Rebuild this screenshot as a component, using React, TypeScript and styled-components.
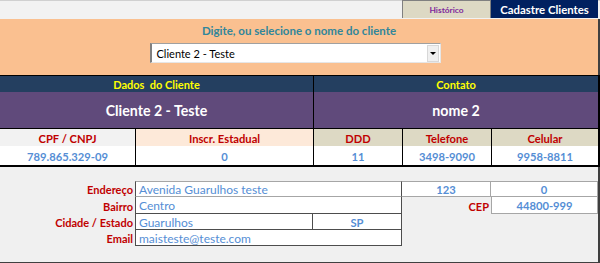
import React from "react";
import styled, { createGlobalStyle, css } from "styled-components";

const GlobalStyle = createGlobalStyle`
  html, body { margin: 0; padding: 0; background: #ffffff; }
  body { font-family: Lato, "Liberation Sans", sans-serif; }
  * { box-sizing: border-box; }
`;

const DARK = "#4d4d4d";
const LIGHT = "#a6a6a6";

const Frame = styled.div`
  width: 600px;
  height: 263px;
  overflow: hidden;
  background: #f0f0f0;
  display: flex;
  flex-direction: column;
`;

const TopBar = styled.div`
  height: 19px;
  flex: none;
  background: #f2f2f2;
  border-top: 1px solid #d0d0d0;
  display: flex;
  justify-content: flex-end;
  padding-right: 2px;
`;

const Tab = styled.div<{ $active?: boolean }>`
  height: 18px;
  margin-top: -1px;
  display: flex;
  align-items: center;
  justify-content: center;
  font-weight: 700;
  ${(p) =>
    p.$active
      ? css`
          width: 107px;
          background: #002060;
          color: #ffffff;
          font-size: 11.4px;
        `
      : css`
          width: 89px;
          background: #ddd9c4;
          color: #7f2a9c;
          font-size: 8.4px;
          border-top: 1px solid #808080;
          border-left: 1px solid #808080;
          border-right: 1px solid #808080;
        `}
`;

const SearchPanel = styled.div`
  height: 56px;
  flex: none;
  background: #fac090;
  border-right: 2px solid #404040;
  display: flex;
  flex-direction: column;
  align-items: center;
`;

const SearchTitle = styled.div`
  margin-top: 4px;
  height: 16px;
  line-height: 16px;
  font-size: 11.5px;
  font-weight: 700;
  color: #31869b;
`;

const Select = styled.div`
  margin-top: 4px;
  margin-right: 8px;
  width: 291px;
  height: 20px;
  background: #ffffff;
  border-top: 1px solid #a0a0a0;
  border-left: 2px solid #808080;
  border-right: 1px solid #e6e6e6;
  border-bottom: 1px solid #e6e6e6;
  display: flex;
  align-items: center;
  justify-content: space-between;
  padding-left: 5px;
  padding-right: 1px;
`;

const SelectText = styled.span`
  font-size: 11px;
  color: #000000;
`;

const DropButton = styled.div`
  width: 12px;
  height: 17px;
  background: #f0f0f0;
  border: 1px solid #d8d8d8;
  display: flex;
  align-items: center;
  justify-content: center;
  &::after {
    content: "";
    border-left: 3px solid transparent;
    border-right: 3px solid transparent;
    border-top: 3px solid #000000;
    margin-top: 1px;
  }
`;

const Table = styled.div`
  flex: none;
  border-top: 1px solid #000000;
  border-right: 2px solid #000000;
  border-bottom: 2px solid #000000;
`;

const SectionRow = styled.div<{ $tall?: boolean }>`
  display: grid;
  grid-template-columns: 314px 284px;
  height: ${(p) => (p.$tall ? "36px" : "16px")};
  background: ${(p) => (p.$tall ? "#604a7b" : "#243f60")};
`;

const SectionCell = styled.div<{ $tall?: boolean }>`
  display: flex;
  align-items: center;
  justify-content: center;
  white-space: pre;
  font-weight: 700;
  color: ${(p) => (p.$tall ? "#ffffff" : "#ffff00")};
  font-size: ${(p) => (p.$tall ? "14.2px" : "11px")};
  padding-top: ${(p) => (p.$tall ? "1px" : "0")};
  &:first-child {
    border-right: 1px solid #000000;
  }
`;

const DataRow = styled.div<{ $head?: boolean }>`
  display: grid;
  grid-template-columns: 136px 178px 89px 89px 106px;
  height: ${(p) => (p.$head ? "18px" : "19px")};
  border-top: ${(p) => (p.$head ? "1px solid #000000" : "none")};
`;

const DataCell = styled.div<{ $bg?: string; $head?: boolean }>`
  display: flex;
  align-items: center;
  justify-content: center;
  background: ${(p) => p.$bg ?? "#ffffff"};
  color: ${(p) => (p.$head ? "#c00000" : "#558ed5")};
  font-weight: 700;
  font-size: 11.2px;
  padding-top: 1px;
  &:not(:last-child) {
    border-right: 1px solid #000000;
  }
`;

const FormArea = styled.div`
  flex: 1;
  background: #f0f0f0;
  border-right: 2px solid #3f3f3f;
  border-bottom: 1px solid #404040;
  padding-top: 14px;
`;

const FormGrid = styled.div`
  display: grid;
  grid-template-columns: 135px 178px 89px 89px 107px;
  grid-template-rows: 16px 17px 16px 16px;
`;

const Label = styled.div<{ $col?: string }>`
  grid-column: ${(p) => p.$col ?? "1"};
  display: flex;
  align-items: center;
  justify-content: flex-end;
  padding-right: 2px;
  padding-top: 1px;
  color: #c00000;
  font-weight: 700;
  font-size: 11px;
`;

type Borders = { t?: string; r?: string; b?: string; l?: string };

const Field = styled.div<{ $col: string; $bd: Borders; $center?: boolean; $strong?: boolean }>`
  grid-column: ${(p) => p.$col};
  background: #ffffff;
  display: flex;
  align-items: center;
  justify-content: ${(p) => (p.$center ? "center" : "flex-start")};
  padding-left: ${(p) => (p.$center ? "0" : "3px")};
  padding-top: 1px;
  color: #558ed5;
  font-size: ${(p) => (p.$strong ? "11.2px" : "12px")};
  font-weight: ${(p) => (p.$strong ? 700 : 400)};
  border-top: ${(p) => (p.$bd.t ? `1px solid ${p.$bd.t}` : "none")};
  border-right: ${(p) => (p.$bd.r ? `1px solid ${p.$bd.r}` : "none")};
  border-bottom: ${(p) => (p.$bd.b ? `1px solid ${p.$bd.b}` : "none")};
  border-left: ${(p) => (p.$bd.l ? `1px solid ${p.$bd.l}` : "none")};
`;

const labels = [
  { text: "CPF / CNPJ", bg: "#f2f2f2", value: "789.865.329-09" },
  { text: "Inscr. Estadual", bg: "#fde9d9", value: "0" },
  { text: "DDD", bg: "#ddd9c4", value: "11" },
  { text: "Telefone", bg: "#ddd9c4", value: "3498-9090" },
  { text: "Celular", bg: "#ddd9c4", value: "9958-8811" },
];

export default function App() {
  return (
    <>
      <GlobalStyle />
      <Frame>
        <TopBar>
          <Tab>Histórico</Tab>
          <Tab $active>Cadastre Clientes</Tab>
        </TopBar>

        <SearchPanel>
          <SearchTitle>Digite, ou selecione o nome do cliente</SearchTitle>
          <Select>
            <SelectText>Cliente 2 - Teste</SelectText>
            <DropButton />
          </Select>
        </SearchPanel>

        <Table>
          <SectionRow>
            <SectionCell>{"Dados  do Cliente"}</SectionCell>
            <SectionCell>Contato</SectionCell>
          </SectionRow>
          <SectionRow $tall>
            <SectionCell $tall>Cliente 2 - Teste</SectionCell>
            <SectionCell $tall>nome 2</SectionCell>
          </SectionRow>
          <DataRow $head>
            {labels.map((l) => (
              <DataCell key={l.text} $head $bg={l.bg}>
                {l.text}
              </DataCell>
            ))}
          </DataRow>
          <DataRow>
            {labels.map((l) => (
              <DataCell key={l.text}>{l.value}</DataCell>
            ))}
          </DataRow>
        </Table>

        <FormArea>
          <FormGrid>
            <Label>Endereço</Label>
            <Field $col="2 / 4" $bd={{ t: LIGHT, l: DARK, r: DARK, b: LIGHT }}>
              Avenida Guarulhos teste
            </Field>
            <Field $col="4" $center $strong $bd={{ t: LIGHT, r: LIGHT, b: LIGHT }}>
              123
            </Field>
            <Field $col="5" $center $strong $bd={{ t: LIGHT, r: LIGHT, b: LIGHT }}>
              0
            </Field>

            <Label>Bairro</Label>
            <Field $col="2 / 4" $bd={{ l: DARK, r: DARK, b: DARK }}>
              Centro
            </Field>
            <Label $col="4">CEP</Label>
            <Field $col="5" $center $strong $bd={{ l: LIGHT, r: LIGHT, b: LIGHT }}>
              44800-999
            </Field>

            <Label>Cidade / Estado</Label>
            <Field $col="2" $bd={{ l: DARK, r: DARK, b: DARK }}>
              Guarulhos
            </Field>
            <Field $col="3" $center $strong $bd={{ r: DARK, b: DARK }}>
              SP
            </Field>

            <Label>Email</Label>
            <Field $col="2 / 4" $bd={{ l: DARK, r: DARK, b: DARK }}>
              maisteste@teste.com
            </Field>
          </FormGrid>
        </FormArea>
      </Frame>
    </>
  );
}
